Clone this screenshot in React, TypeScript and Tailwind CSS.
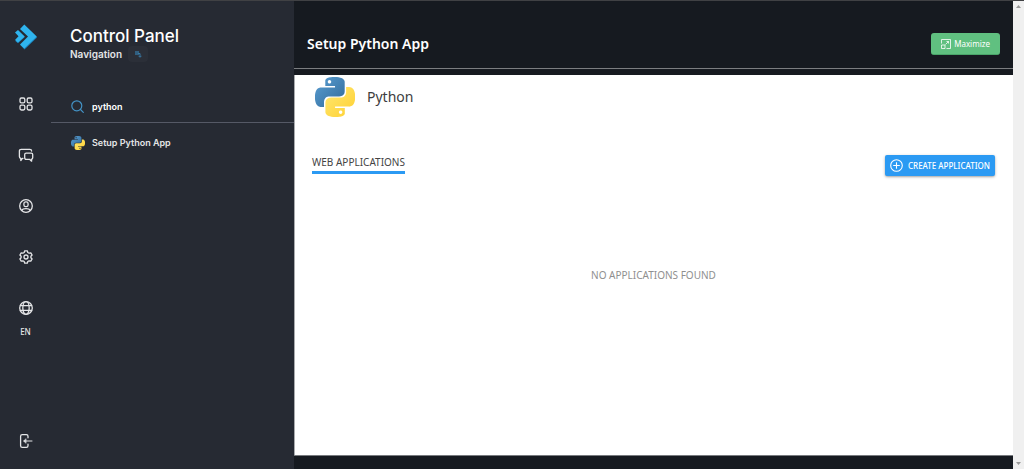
import React from "react";

function PythonLogo({ id, className }: { id: string; className: string }) {
  return (
    <svg viewBox="0 0 24 24" className={className} aria-hidden="true">
      <defs>
        <linearGradient id={id + "-blue"} x1="0" y1="0" x2="1" y2="1">
          <stop offset="0" stopColor="#5a9fd4" />
          <stop offset="1" stopColor="#306998" />
        </linearGradient>
        <linearGradient id={id + "-yellow"} x1="0" y1="0" x2="1" y2="1">
          <stop offset="0" stopColor="#ffe873" />
          <stop offset="1" stopColor="#ffd030" />
        </linearGradient>
      </defs>
      <path
        fill={`url(#${id}-blue)`}
        d="M14.25.18l.9.2.73.26.59.3.45.32.34.34.25.34.16.33.1.3.04.26.02.2-.01.13V8.5l-.05.63-.13.55-.21.46-.26.38-.3.31-.33.25-.35.19-.35.14-.33.1-.3.07-.26.04-.21.02H8.77l-.69.05-.59.14-.5.22-.41.27-.33.32-.27.35-.2.36-.15.37-.1.35-.07.32-.04.27-.02.21v3.06H3.17l-.21-.03-.28-.07-.32-.12-.35-.18-.36-.26-.36-.36-.35-.46-.32-.59-.28-.73-.21-.88-.14-1.05-.05-1.23.06-1.22.16-1.04.24-.87.32-.71.36-.57.4-.44.42-.33.42-.24.4-.16.36-.1.32-.05.24-.01h.16l.06.01h8.16v-.83H6.18l-.01-2.75-.02-.37.05-.34.11-.31.17-.28.25-.26.31-.23.38-.2.44-.18.51-.15.58-.12.64-.1.71-.06.77-.04.84-.02 1.27.05zm-6.3 1.98l-.23.33-.08.41.08.41.23.34.33.22.41.09.41-.09.33-.22.23-.34.08-.41-.08-.41-.23-.33-.33-.22-.41-.09-.41.09z"
      />
      <path
        fill={`url(#${id}-yellow)`}
        d="M21.1 6.11l.28.06.32.12.35.18.36.27.36.35.35.47.32.59.28.73.21.88.14 1.04.05 1.23-.06 1.23-.16 1.04-.24.86-.32.71-.36.57-.4.45-.42.33-.42.24-.4.16-.36.09-.32.05-.24.02-.16-.01h-8.22v.82h5.84l.01 2.76.02.36-.05.34-.11.31-.17.29-.25.25-.31.24-.38.2-.44.17-.51.15-.58.13-.64.09-.71.07-.77.04-.84.01-1.27-.04-1.07-.14-.9-.2-.73-.25-.59-.3-.45-.33-.34-.34-.25-.34-.16-.33-.1-.3-.04-.25-.02-.2.01-.13v-5.34l.05-.64.13-.54.21-.46.26-.38.3-.32.33-.24.35-.2.35-.14.33-.1.3-.06.26-.04.21-.02.13-.01h5.84l.69-.05.59-.14.5-.21.41-.28.33-.32.27-.35.2-.36.15-.36.1-.35.07-.32.04-.28.02-.21V6.07h2.09l.14.01zm-6.47 14.25l-.23.33-.08.41.08.41.23.33.33.23.41.08.41-.08.33-.23.23-.33.08-.41-.08-.41-.23-.33-.33-.23-.41-.08-.41.08z"
      />
    </svg>
  );
}

function BrandLogo() {
  return (
    <svg viewBox="0 0 22 26" className="h-[26px] w-[22px]" aria-hidden="true">
      <path fill="#1b7fb8" d="M5.3 21 9.5 25.600 22 13.600 21 12Z" />
      <path fill="#2fb4ee" d="M5 5 9.300.6 21.700 12.600 9.300 24.600 5 20.400 13 12.600Z" />
      <path fill="#1b7fb8" d="M.3 17 3 19.300 9.600 13.200 9 12Z" />
      <path fill="#2fb4ee" d="M0 8.600 3 5.900 9.700 12.400 3 18.600 0 16 3.500 12.300Z" />
    </svg>
  );
}

function RailIcon({ children }: { children: React.ReactNode }) {
  return (
    <svg
      viewBox="0 0 14 14"
      className="size-3.5 overflow-visible"
      fill="none"
      stroke="currentColor"
      strokeWidth="1.3"
      strokeLinecap="round"
      strokeLinejoin="round"
      aria-hidden="true"
    >
      {children}
    </svg>
  );
}

const railItems = [
  {
    label: "Dashboard",
    icon: (
      <>
        <rect x="1" y="1" width="4.8" height="4.8" rx="1.4" />
        <rect x="8.2" y="1" width="4.8" height="4.8" rx="1.4" />
        <rect x="1" y="8.2" width="4.8" height="4.8" rx="1.4" />
        <rect x="8.2" y="8.2" width="4.8" height="4.8" rx="1.4" />
      </>
    ),
  },
  {
    label: "Messages",
    icon: (
      <>
        <path d="M4 10.300H3.400L1.800 12.500V10.300C.8 10.100.4 9.500.4 8.500V3.100C.4 1.900 1 1.400 2.200 1.400h8.600c1.200 0 1.800.5 1.800 1.600" />
        <path d="M7.200 5.100h5c1 0 1.500.5 1.500 1.500v3.200c0 .8-.4 1.300-1.100 1.400v2l-2-1.900H7.200c-1 0-1.500-.5-1.500-1.500V6.600c0-1 .5-1.500 1.500-1.500Z" />
      </>
    ),
  },
  {
    label: "Account",
    icon: (
      <>
        <circle cx="7" cy="7" r="6.3" />
        <rect x="4.9" y="2.9" width="4.2" height="4.8" rx="1.8" />
        <path d="M2.800 11.400c.6-1.200 1.800-1.700 4.200-1.700s3.600.5 4.200 1.700" />
      </>
    ),
  },
  {
    label: "Settings",
    icon: (
      <>
        <path d="M5.700.8h2.600l.5 1.700 1.300.7 1.700-.4 1.300 2.200L11.900 6.300v1.400l1.200 1.300-1.300 2.200-1.700-.4-1.300.7-.5 1.700H5.700l-.5-1.700-1.300-.7-1.700.4L.9 9l1.200-1.300V6.300L.9 5l1.300-2.200 1.700.4 1.300-.7Z" />
        <circle cx="7" cy="7" r="2" />
      </>
    ),
  },
  {
    label: "Language",
    icon: (
      <>
        <circle cx="7" cy="7" r="6.3" />
        <ellipse cx="7" cy="7" rx="3.2" ry="6.3" />
        <path d="M1.400 4.600h11.200M1.400 9.400h11.200" />
      </>
    ),
  },
];

export default function App() {
  return (
    <div className="flex min-h-screen border-t border-[#404144] bg-[#262a33] font-['Noto_Sans',sans-serif]">
      <nav aria-label="Main" className="flex w-[51px] shrink-0 flex-col items-center pt-[23px] pb-[21px] text-[#e4e5e7]">
        <a href="#home" aria-label="Home">
          <BrandLogo />
        </a>
        <div className="mt-[47px] flex flex-col items-center gap-[37px]">
          {railItems.map((item) => (
            <button key={item.label} type="button" aria-label={item.label}>
              <RailIcon>{item.icon}</RailIcon>
            </button>
          ))}
        </div>
        <span className="mt-[9px] text-[8px] leading-4 font-medium">EN</span>
        <button type="button" aria-label="Log out" className="mt-auto">
          <RailIcon>
            <path d="M9 3.800V2.200C9 1.100 8.500.6 7.400.6H3.200C2.100.6 1.600 1.100 1.600 2.200v9.600c0 1.100.5 1.600 1.600 1.600h4.200c1.100 0 1.600-.5 1.600-1.600v-1.600" />
            <path d="M13 7H5" strokeWidth="1" />
            <path d="M6.800 4.900 4.600 7l2.200 2.100Z" fill="currentColor" strokeWidth="0.6" />
          </RailIcon>
        </button>
      </nav>

      <aside className="w-[243px] shrink-0 font-['Inter',sans-serif] text-[#e4e5e7]">
        <header className="pt-[25px] pr-5 pl-[19px]">
          <h1 className="text-[17px] leading-5 font-medium text-white">Control Panel</h1>
          <div className="flex items-center gap-1.5 text-[10px] leading-4 font-semibold">
            <span>Navigation</span>
            <button
              type="button"
              aria-label="Switch navigation"
              className="flex h-4 w-5 items-center justify-center rounded bg-[#2b2f38]"
            >
              <svg viewBox="0 0 8 8" className="size-2" aria-hidden="true">
                <path fill="#315f80" d="M1 1h4v4H1Z" />
                <path fill="none" stroke="#397aa5" d="M4 3.500h2V7M4.500 5.800 6 7.300l1.500-1.500" />
              </svg>
            </button>
          </div>
        </header>
        <label className="mt-[29px] flex h-8 items-center gap-2 border-b border-[#555966] px-5">
          <svg
            viewBox="0 0 13 13"
            className="size-[13px]"
            fill="none"
            stroke="#4392c5"
            strokeWidth="1.2"
            strokeLinecap="round"
            aria-hidden="true"
          >
            <circle cx="5.8" cy="5.8" r="5" />
            <path d="m9.500 9.500 2.800 2.800" />
          </svg>
          <input
            type="text"
            aria-label="Search"
            defaultValue="python"
            className="min-w-0 flex-1 bg-transparent text-[9px] leading-4 font-semibold text-white outline-none"
          />
        </label>
        <a href="#python" className="flex h-[39px] items-center gap-[7px] px-5 text-[9px] font-semibold">
          <PythonLogo id="nav" className="size-3.5" />
          Setup Python App
        </a>
      </aside>

      <div className="flex min-w-0 flex-1 flex-col bg-[#161a20]">
        <header className="flex h-[68px] items-end justify-between border-b border-[#7b7d80] pr-[13px] pb-[13px] pl-[13px]">
          <h2 className="pb-px text-sm leading-5 font-semibold text-white">Setup Python App</h2>
          <button
            type="button"
            className="flex h-[22px] items-center gap-[3px] rounded-[3px] border-b border-[#4aa569] bg-[#60c080] px-2.5 text-[8px] text-white"
          >
            <svg viewBox="0 0 10 10" className="size-2.5" fill="none" stroke="currentColor" strokeWidth="0.8" aria-hidden="true">
              <path d="M.5 4.500v-4h9v9h-4" />
              <path d="M.5 6h3.500v3.500H.5Z" />
              <path d="M4.500 5.500 7.500 2.500M5.500 2.500h2v2" />
            </svg>
            Maximize
          </button>
        </header>
        <main className="mt-[6px] flex flex-1 flex-col border-l border-[#a9abae] bg-white pr-[18px] pl-[17px]">
          <div className="mt-0.5 flex h-10 items-center gap-3 px-[3px]">
            <PythonLogo id="app" className="size-10" />
            <h3 className="text-sm leading-5 text-[#3d3d3d]">Python</h3>
          </div>
          <div className="mt-[37px] flex items-start justify-between">
            <h4 className="border-b-3 border-[#2b9af3] pb-px text-[10px] leading-4 text-[#444]">
              WEB APPLICATIONS
            </h4>
            <button
              type="button"
              className="mt-px flex h-[21px] items-center gap-[5px] rounded-[2px] bg-[#2b9af3] px-[5px] text-[8px] font-medium text-white shadow-sm shadow-black/30"
            >
              <svg viewBox="0 0 13 13" className="size-[13px]" fill="none" stroke="currentColor" strokeWidth="1.1" aria-hidden="true">
                <circle cx="6.5" cy="6.5" r="5.8" />
                <path d="M6.500 3.200v6.600M3.200 6.500h6.600" />
              </svg>
              CREATE APPLICATION
            </button>
          </div>
          <p className="mt-[91px] text-center text-[10px] leading-4 text-[#8f8f8f]">NO APPLICATIONS FOUND</p>
        </main>
        <div className="h-3.5 border-t border-[#777a7e]" />
      </div>

      <div className="flex w-[11px] shrink-0 flex-col items-center justify-between bg-[#f0f0f0] pt-1 pb-1" aria-hidden="true">
        <svg viewBox="0 0 5 3" className="h-[3px] w-[5px]">
          <path fill="#999" d="M0 3 2.500 0 5 3Z" />
        </svg>
        <svg viewBox="0 0 5 3" className="h-[3px] w-[5px]">
          <path fill="#999" d="M0 0 2.500 3 5 0Z" />
        </svg>
      </div>
    </div>
  );
}
